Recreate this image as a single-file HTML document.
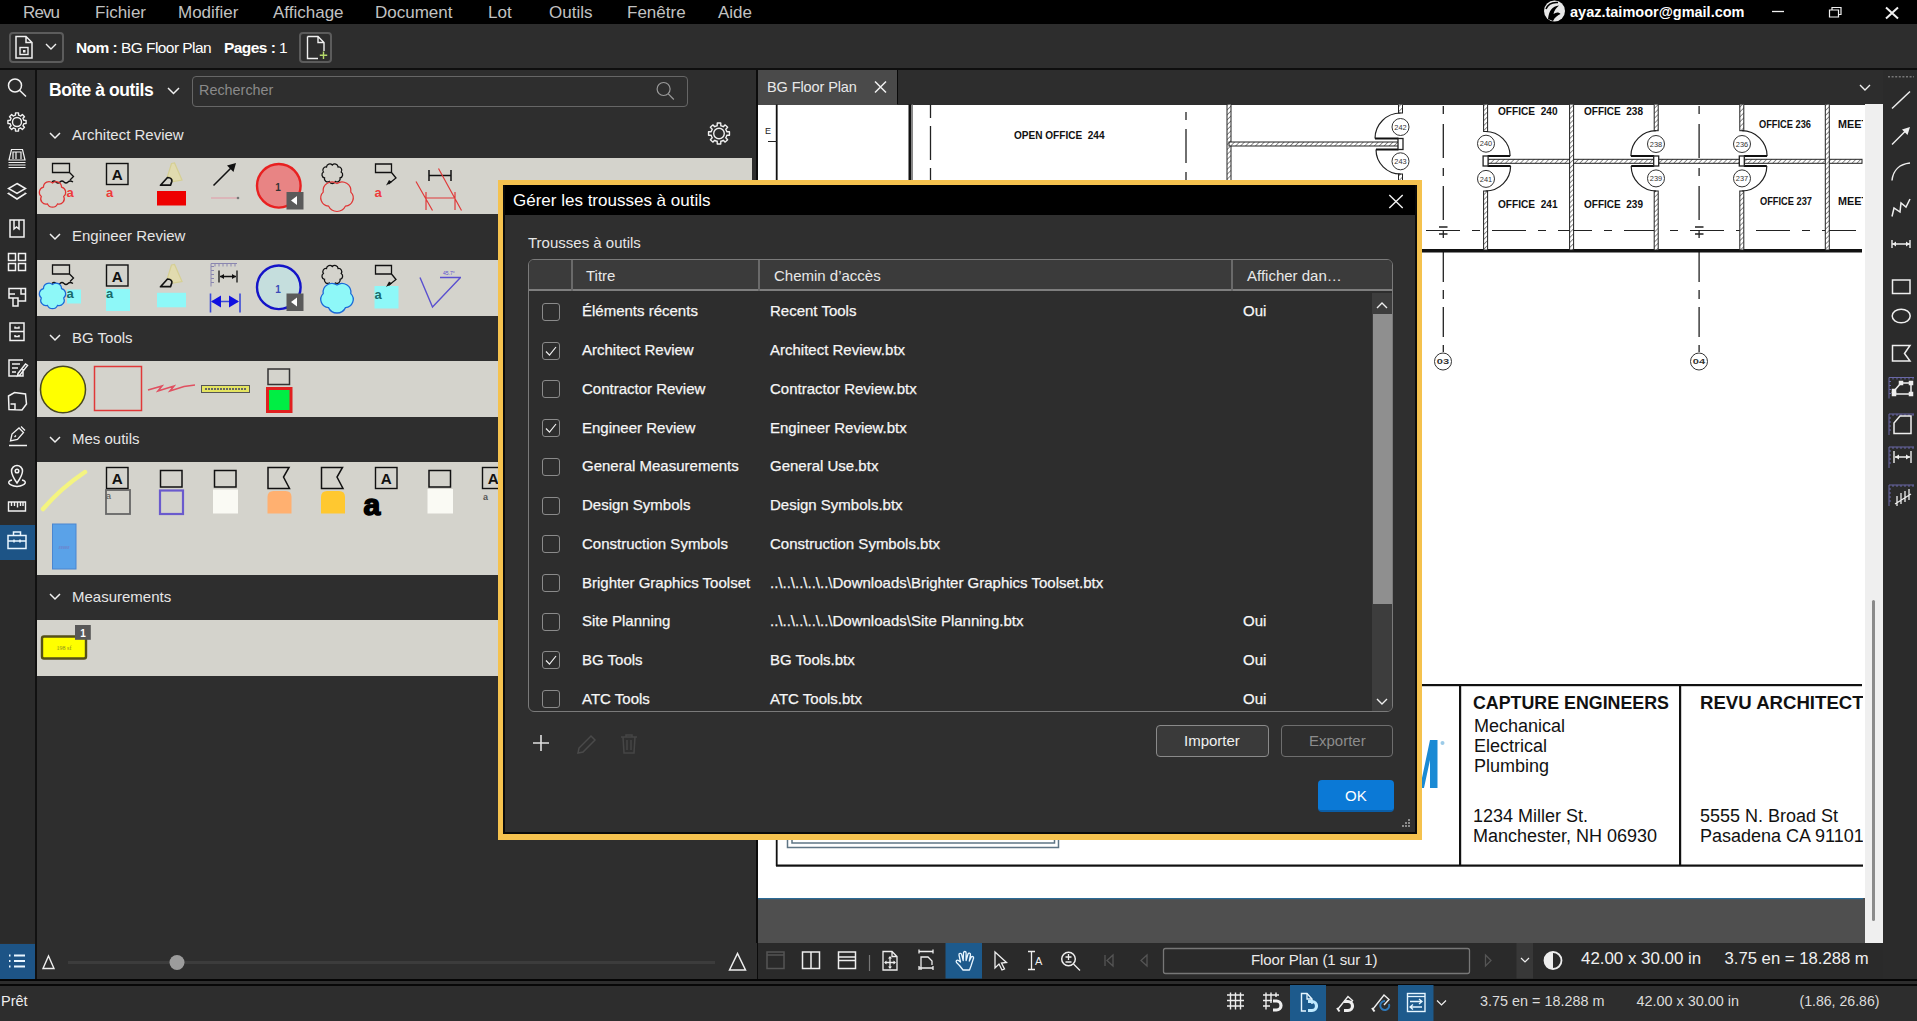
<!DOCTYPE html>
<html><head><meta charset="utf-8">
<style>
*{margin:0;padding:0;box-sizing:border-box}
html,body{width:1917px;height:1021px;overflow:hidden;background:#2e2e2e;font-family:"Liberation Sans",sans-serif;color:#fff}
.a{position:absolute}
.t{position:absolute;white-space:nowrap;line-height:1}
svg{position:absolute;overflow:visible}
</style></head><body>
<!-- MENU BAR -->
<div class="a" style="left:0;top:0;width:1917px;height:24.5px;background:#000"></div>
<div id="menu">
<span class="t" style="left:23px;top:4px;font-size:17px;letter-spacing:-0.9px;color:#c2c2c2">Revu</span>
<span class="t" style="left:95px;top:4px;font-size:17px;color:#c2c2c2">Fichier</span>
<span class="t" style="left:178px;top:4px;font-size:17px;color:#c2c2c2">Modifier</span>
<span class="t" style="left:273px;top:4px;font-size:17px;color:#c2c2c2">Affichage</span>
<span class="t" style="left:375px;top:4px;font-size:17px;color:#c2c2c2">Document</span>
<span class="t" style="left:488px;top:4px;font-size:17px;color:#c2c2c2">Lot</span>
<span class="t" style="left:549px;top:4px;font-size:17px;color:#c2c2c2">Outils</span>
<span class="t" style="left:627px;top:4px;font-size:17px;color:#c2c2c2">Fenêtre</span>
<span class="t" style="left:718px;top:4px;font-size:17px;color:#c2c2c2">Aide</span>
</div>
<span class="t" style="left:1570px;top:5px;font-size:14.5px;font-weight:bold;color:#fff">ayaz.taimoor@gmail.com</span>

<!-- TOOLBAR -->
<div class="a" style="left:0;top:24px;width:1917px;height:44px;background:#2d2d2d"></div>
<div class="a" style="left:0;top:68px;width:1917px;height:2px;background:#0e0e0e"></div>
<div class="a" style="left:9px;top:32px;width:55px;height:31px;border:2px solid #5c5c5c;border-radius:4px"></div>
<span class="t" style="left:76px;top:40px;font-size:15.5px;letter-spacing:-0.55px;color:#fff"><b>Nom :</b> BG Floor Plan</span>
<span class="t" style="left:224px;top:40px;font-size:15.5px;letter-spacing:-0.55px;color:#fff"><b>Pages :</b> 1</span>
<div class="a" style="left:299px;top:32px;width:33px;height:31px;border:2px solid #5c5c5c;border-radius:4px"></div>

<!-- LEFT ICON STRIP -->
<div class="a" style="left:0;top:70px;width:35px;height:873px;background:#2b2b2b"></div>
<div class="a" style="left:35px;top:70px;width:2px;height:912px;background:#111"></div>
<div class="a" style="left:0;top:525px;width:35px;height:35px;background:#1d5486"></div>
<div class="a" style="left:0;top:944px;width:35px;height:35px;background:#1d5486"></div>


<!-- ICONS LEFT STRIP -->
<svg width="36" height="500" style="left:0;top:70px" fill="none" stroke="#f2f2f2" stroke-width="1.5">
 <!-- search y=87 -->
 <circle cx="15" cy="15.5" r="6.5"/><path d="M19.8 20.5 L26 26.5"/>
 <!-- gear y=122 -->
 <g stroke-width="1.4" stroke-linejoin="round"><path d="M15.42 45.18 L15.49 42.92 L18.51 42.92 L18.58 45.18 A7.0 7.0 0 0 1 20.70 46.06 L22.35 44.51 L24.49 46.65 L22.94 48.30 A7.0 7.0 0 0 1 23.82 50.42 L26.08 50.49 L26.08 53.51 L23.82 53.58 A7.0 7.0 0 0 1 22.94 55.70 L24.49 57.35 L22.35 59.49 L20.70 57.94 A7.0 7.0 0 0 1 18.58 58.82 L18.51 61.08 L15.49 61.08 L15.42 58.82 A7.0 7.0 0 0 1 13.30 57.94 L11.65 59.49 L9.51 57.35 L11.06 55.70 A7.0 7.0 0 0 1 10.18 53.58 L7.92 53.51 L7.92 50.49 L10.18 50.42 A7.0 7.0 0 0 1 11.06 48.30 L9.51 46.65 L11.65 44.51 L13.30 46.06 A7.0 7.0 0 0 1 15.42 45.18 Z"/><circle cx="17" cy="52" r="4.5"/></g>
 <!-- sheets y=157 -->
 <path d="M9 90 L11.5 79.5 H22.5 L25 90 Z M13 89 V82 H21 V89 M16 82 V89" stroke-width="1.2"/>
 <path d="M8.5 92.5 H25.5 M8.5 95 H25.5 M8.5 97.5 H25.5" stroke-width="1.1"/>
 <!-- layers y=192 -->
 <path d="M17 113.5 L25.5 118.5 L17 123.5 L8.5 118.5 Z"/>
 <path d="M9.5 123 L8.5 123.5 L17 129 L25.5 123.5 L24.5 123"/>
 <!-- bookmark y=228 -->
 <path d="M10 150 H24 V167 H10 Z M14 150 V159 L16.5 157 L19 159 V150"/>
 <!-- grid y=262 -->
 <rect x="8.5" y="183.5" width="7" height="7"/><rect x="18.5" y="183.5" width="7" height="7"/>
 <rect x="8.5" y="193.5" width="7" height="7"/><rect x="18.5" y="193.5" width="7" height="7"/>
 <!-- floorplan y=297 -->
 <path d="M9 218.5 H25.5 V231 H18 V236 H13 V228 H9 Z M9 224 H15 M13 228 H18 V231 M21 218.5 V224 H25.5"/>
 <!-- cabinet y=332 -->
 <path d="M10 253 H24 V270.5 H10 Z M10 261.5 H24 M15 256.5 V258 H19 V256.5 M15 265 V266.5 H19 V265"/>
 <!-- form y=367 -->
 <path d="M23 290 H9 V306 H23 V299 M12 294 H20 M12 298 H18 M12 302 H16 M18 303.5 L25.5 294 L27.5 295.5 L20 305 L17.5 306 Z"/>
 <!-- polygon y=402 -->
 <path d="M8.5 326 L14.5 322.5 L25.5 324 L26.5 334 L22 340 L9 339.5 Z M10.5 334 H15 V339.5"/>
 <!-- pen sign y=437 -->
 <path d="M9 447.5 H27 M10.5 443 L12 436 L19 430 L23.5 434.5 L17.5 441.5 Z M21 428.5 L25 432.5 M14.5 439 L16 437.5" stroke-width="1.3" transform="translate(0 -72)"/>
 <!-- location y=475 -->
 <g transform="translate(0 -68)"><path d="M17 481 C12 474 11.5 471 11.5 469 A5.5 5.5 0 0 1 22.5 469 C22.5 471 22 474 17 481 Z"/>
 <circle cx="17" cy="469" r="1.8"/>
 <path d="M12 478 C7 479 7 483 17 484.5 C27 483 27 479 22 478"/></g>
</svg>
<svg width="36" height="60" style="left:0;top:495px" fill="none" stroke="#f2f2f2" stroke-width="1.5">
 <!-- ruler y=507 -->
 <path d="M8.5 7 H25.5 V16 H8.5 Z M11.5 7 V11 M14.5 7 V11 M17.5 7 V12.5 M20.5 7 V11 M23 7 V11" stroke-width="1.4"/>
 <!-- toolbox y=542 -->
 <path d="M8 40.5 H26 V53.5 H8 Z M8 46 H26 M13.5 40.5 V37 H20.5 V40.5 M14 44.5 V47.5 M20 44.5 V47.5" stroke="#e9f6ff"/>
</svg>
<!-- bottom list icon -->
<svg width="36" height="36" style="left:0;top:943px" fill="none" stroke="#e9f6ff" stroke-width="1.8">
 <path d="M9 12.5 H10.5 M9 18 H10.5 M9 23.5 H10.5 M14 12.5 H25 M14 18 H25 M14 23.5 H25"/>
</svg>

<!-- TOOLBOX PANEL -->
<div class="a" style="left:37px;top:70px;width:720px;height:912px;background:#2e2e2e"></div>
<span class="t" style="left:49px;top:82px;font-size:17.5px;letter-spacing:-0.4px;font-weight:bold;color:#fff">Boîte à outils</span>
<div class="a" style="left:192px;top:75.5px;width:496px;height:31px;border:1.6px solid #666;border-radius:4px"></div>
<span class="t" style="left:199px;top:83px;font-size:14.4px;color:#8a8a8a">Rechercher</span>

<span class="t" style="left:72px;top:127px;font-size:15px;color:#e6e6e6">Architect Review</span>
<div class="a" style="left:37px;top:158px;width:715px;height:56px;background:#d4d3cc"></div>
<span class="t" style="left:72px;top:228px;font-size:15px;color:#e6e6e6">Engineer Review</span>
<div class="a" style="left:37px;top:260px;width:715px;height:56px;background:#d4d3cc"></div>
<span class="t" style="left:72px;top:330px;font-size:15px;color:#e6e6e6">BG Tools</span>
<div class="a" style="left:37px;top:361px;width:715px;height:56px;background:#d4d3cc"></div>
<span class="t" style="left:72px;top:431px;font-size:15px;color:#e6e6e6">Mes outils</span>
<div class="a" style="left:37px;top:462px;width:715px;height:113px;background:#d4d3cc"></div>
<span class="t" style="left:72px;top:589px;font-size:15px;color:#e6e6e6">Measurements</span>
<div class="a" style="left:37px;top:620px;width:715px;height:56px;background:#d4d3cc"></div>

<!-- TOOLICONS -->
<svg width="760" height="700" style="left:0;top:0" font-family="Liberation Sans, sans-serif">
<g>
<g transform="translate(0 0)">
<path d="M52.5 163.5 H69.5 V172.5 H52.5 Z M69.5 172.5 L73.5 176.5 L70 180" fill="none" stroke="#111" stroke-width="1.3"/>
<path d="M52 182 Q54 180 56 182 T60 182 T64 182 T68 182 T73 182" fill="none" stroke="#111" stroke-width="1.3"/>
<path d="M52.5 183.0 A5.4 5.4 0 0 1 61.5 187.1 A5.3 5.3 0 0 1 63.7 196.4 A5.3 5.3 0 0 1 57.5 203.9 A5.5 5.5 0 0 1 47.5 203.9 A5.3 5.3 0 0 1 41.3 196.4 A5.3 5.3 0 0 1 43.5 187.1 A5.4 5.4 0 0 1 52.5 183.0 Z" fill="none" stroke="#e03434" stroke-width="1.2"/>
<text x="66.5" y="196.5" font-size="13" font-weight="bold" fill="#ee3a3a">a</text>
<rect x="106.5" y="163.5" width="21.5" height="21" fill="none" stroke="#111" stroke-width="1.4"/>
<text x="117.3" y="180" font-size="14.5" font-weight="bold" fill="#111" text-anchor="middle" textLength="11" lengthAdjust="spacingAndGlyphs">A</text>
<text x="106" y="196.5" font-size="13" font-weight="bold" fill="#ee3a3a">a</text>
<path d="M171.5 163.5 L174.5 163 L182 180 L173 181.5 Q171.5 176.5 167.5 176.5 Z" fill="#e6dea6" stroke="#d6ce80" stroke-width="1.2" opacity="0.75"/><path d="M160.5 185.2 L167.5 177.5 Q172.5 178 171.8 181.5 L170.5 185.2 Z" fill="none" stroke="#111" stroke-width="1.7" stroke-linejoin="round"/>

<rect x="157" y="191" width="29" height="14.5" fill="#ee0000"/>
</g>
<path d="M213.5 185.5 L233 166" stroke="#111" stroke-width="1.6"/><path d="M236 163 L227 165.5 L233.5 172 Z" fill="#111"/>
<path d="M211 198 H237" stroke="#dcb0b4" stroke-width="1.6"/><circle cx="238" cy="198" r="1.3" fill="#777"/>
<circle cx="278.8" cy="185.8" r="21.8" fill="#e88484" stroke="#e82020" stroke-width="2.4"/>
<text x="278" y="191" font-size="10" font-weight="bold" fill="#333" text-anchor="middle">1</text>
<rect x="286.5" y="192" width="17" height="17.5" fill="#5a5a5a"/><path d="M291 200.5 L297 196 V205 Z" fill="#fff"/>
<path d="M332.3 165.0 A3.4 3.4 0 0 1 338.1 167.0 A3.2 3.2 0 0 1 341.2 172.0 A3.2 3.2 0 0 1 340.1 177.8 A3.3 3.3 0 0 1 335.4 181.5 A3.4 3.4 0 0 1 329.2 181.5 A3.3 3.3 0 0 1 324.5 177.8 A3.2 3.2 0 0 1 323.4 172.0 A3.2 3.2 0 0 1 326.5 167.0 A3.4 3.4 0 0 1 332.3 165.0 Z" fill="none" stroke="#111" stroke-width="1.3"/>
<path d="M337.0 183.5 A8.9 8.9 0 0 1 350.8 192.1 A8.2 8.2 0 0 1 345.5 206.1 A9.4 9.4 0 0 1 328.5 206.1 A8.2 8.2 0 0 1 323.2 192.1 A8.9 8.9 0 0 1 337.0 183.5 Z" fill="none" stroke="#e03434" stroke-width="1.2"/>
<path d="M375.5 164 H391.5 V172.5 H375.5 Z M391.5 172.5 L396 178 L388.5 184" fill="none" stroke="#111" stroke-width="1.3"/><path d="M386 185.5 L392 182 L389 180 Z" fill="#111"/>
<text x="374.5" y="197" font-size="13" font-weight="bold" fill="#ee3a3a">a</text>
<path d="M429 175.5 H451 M429 170 V181 M451 170 V181" stroke="#111" stroke-width="1.5"/>
<path d="M416 181.5 L432.5 210.5 M438.5 168.5 L461.5 210.5 M426 198 H455 M426 192 V210 M455 192 V210" stroke="#e03a3a" stroke-width="1.2" fill="none"/>
</g>
<g transform="translate(0 101.5)">
<path d="M52.5 163.5 H69.5 V172.5 H52.5 Z M69.5 172.5 L73.5 176.5 L70 180" fill="none" stroke="#111" stroke-width="1.3"/>
<path d="M52 182 Q54 180 56 182 T60 182 T64 182 T68 182 T73 182" fill="none" stroke="#111" stroke-width="1.3"/>
<rect x="67" y="188" width="14" height="14" fill="#8ef8f8"/>
<path d="M52.5 183.0 A5.4 5.4 0 0 1 61.5 187.1 A5.3 5.3 0 0 1 63.7 196.4 A5.3 5.3 0 0 1 57.5 203.9 A5.5 5.5 0 0 1 47.5 203.9 A5.3 5.3 0 0 1 41.3 196.4 A5.3 5.3 0 0 1 43.5 187.1 A5.4 5.4 0 0 1 52.5 183.0 Z" fill="#8ef8f8" stroke="#1a6ad8" stroke-width="1.2"/>
<text x="66.5" y="196.5" font-size="13" font-weight="bold" fill="#1a6a6a">a</text>
<rect x="106.5" y="163.5" width="21.5" height="21" fill="none" stroke="#111" stroke-width="1.4"/>
<text x="117.3" y="180" font-size="14.5" font-weight="bold" fill="#111" text-anchor="middle" textLength="11" lengthAdjust="spacingAndGlyphs">A</text>
<rect x="106" y="187.5" width="24" height="22" fill="#8ef8f8"/>
<text x="106" y="196.5" font-size="13" font-weight="bold" fill="#1a6a6a">a</text>
<path d="M171.5 163.5 L174.5 163 L182 180 L173 181.5 Q171.5 176.5 167.5 176.5 Z" fill="#e6dea6" stroke="#d6ce80" stroke-width="1.2" opacity="0.75"/><path d="M160.5 185.2 L167.5 177.5 Q172.5 178 171.8 181.5 L170.5 185.2 Z" fill="none" stroke="#111" stroke-width="1.7" stroke-linejoin="round"/>

<rect x="157" y="191.3" width="29" height="14.5" fill="#8ef8f8"/>
</g>
<g transform="translate(0 101.5)">
<path d="M211 162 V185 M211 162 H237 M211 165 H214 M211 169 H214 M211 173 H214 M211 177 H214 M211 181 H214 M215 162 V165 M219 162 V165 M223 162 V165 M227 162 V165 M231 162 V165 M235 162 V165" stroke="#8a86b0" stroke-width="1"/>
<path d="M219 169 V181 M237 169 V181 M220 175 H236" stroke="#111" stroke-width="1.3"/><path d="M220 175 L224 172.5 V177.5 Z M236 175 L232 172.5 V177.5 Z" fill="#111"/>
<path d="M210.5 192 V211 M240 192 V211 M212 200 H238" stroke="#3a4ad8" stroke-width="1.6"/><path d="M211 200 L221 194 V206 Z M239 200 L229 194 V206 Z" fill="#1010e0"/>
<circle cx="278.8" cy="185.8" r="21.8" fill="#c5dedd" stroke="#1414c8" stroke-width="2.4"/>
<text x="278" y="191" font-size="10" font-weight="bold" fill="#3a4ab8" text-anchor="middle">1</text>
<rect x="286.5" y="192" width="17" height="17.5" fill="#5a5a5a"/><path d="M291 200.5 L297 196 V205 Z" fill="#fff"/>
<path d="M332.3 165.0 A3.4 3.4 0 0 1 338.1 167.0 A3.2 3.2 0 0 1 341.2 172.0 A3.2 3.2 0 0 1 340.1 177.8 A3.3 3.3 0 0 1 335.4 181.5 A3.4 3.4 0 0 1 329.2 181.5 A3.3 3.3 0 0 1 324.5 177.8 A3.2 3.2 0 0 1 323.4 172.0 A3.2 3.2 0 0 1 326.5 167.0 A3.4 3.4 0 0 1 332.3 165.0 Z" fill="none" stroke="#111" stroke-width="1.3"/>
<path d="M337.0 183.5 A8.9 8.9 0 0 1 350.8 192.1 A8.2 8.2 0 0 1 345.5 206.1 A9.4 9.4 0 0 1 328.5 206.1 A8.2 8.2 0 0 1 323.2 192.1 A8.9 8.9 0 0 1 337.0 183.5 Z" fill="#8ef8f8" stroke="#1a6ad8" stroke-width="1.3"/>
<rect x="374.5" y="184.5" width="24" height="22.5" fill="#8ef8f8"/>
<path d="M375.5 164 H391.5 V172.5 H375.5 Z M391.5 172.5 L396 178 L388.5 184" fill="none" stroke="#111" stroke-width="1.3"/><path d="M386 185.5 L392 182 L389 180 Z" fill="#111"/>
<text x="374.5" y="197" font-size="13" font-weight="bold" fill="#1a6a6a">a</text>
<path d="M420 176 L432.5 205.5 L460.5 176 M440 176 H461" stroke="#5a50d0" stroke-width="1.4" fill="none"/>
<text x="443" y="173" font-size="5" fill="#5a50d0">45.7°</text>
</g>
<ellipse cx="63" cy="389.5" rx="22.5" ry="23.3" fill="#ffff00" stroke="#4a4a20" stroke-width="1.5"/>
<rect x="94.5" y="366.5" width="47" height="44" fill="none" stroke="#e03838" stroke-width="1.5"/>
<path d="M148 390 L162 386 L158 391 L174 386 L170 391 L184 386.5 L195 385" fill="none" stroke="#e05060" stroke-width="1.6"/>
<rect x="201.5" y="385.5" width="48" height="7" fill="#e4e460" stroke="#555" stroke-width="1"/>
<path d="M205 389 H246" stroke="#666" stroke-width="2" stroke-dasharray="2 1"/>
<rect x="268" y="369" width="21.5" height="15.5" fill="none" stroke="#333" stroke-width="1.5"/>
<rect x="267.5" y="388.5" width="23.5" height="23" fill="#00ee44" stroke="#e02020" stroke-width="3"/>
<path d="M43 509 C55 495 70 482 85 472" fill="none" stroke="#f4f480" stroke-width="4.5" stroke-linecap="round"/>
<rect x="106.5" y="467.5" width="21.5" height="21" fill="none" stroke="#111" stroke-width="1.4"/>
<text x="117.3" y="484" font-size="14.5" font-weight="bold" fill="#111" text-anchor="middle" textLength="11" lengthAdjust="spacingAndGlyphs">A</text>
<rect x="106" y="490" width="24" height="24" fill="none" stroke="#666" stroke-width="1.8"/>
<text x="106" y="499" font-size="9" fill="#555">a</text>
<rect x="160.5" y="470.5" width="21.5" height="16.5" fill="none" stroke="#111" stroke-width="1.5"/>
<rect x="160" y="490.5" width="23" height="23.5" fill="none" stroke="#6a5acd" stroke-width="2.2"/>
<rect x="214.5" y="470.5" width="21.5" height="16.5" fill="none" stroke="#111" stroke-width="1.5"/>
<rect x="213" y="489.5" width="25" height="24" fill="#fafaf4"/>
<path d="M268.0 467.5 H289.0 L283.5 477 L289.5 488.5 H268.0 Z" fill="none" stroke="#111" stroke-width="1.5"/>
<path d="M267.5 513.5 V497 Q267.5 491 273.5 491 H285.5 Q291.5 491 291.5 497 V513.5 Z" fill="#ffb070"/>
<path d="M321.5 467.5 H342.5 L337 477 L343 488.5 H321.5 Z" fill="none" stroke="#111" stroke-width="1.5"/>
<path d="M321 513.5 V497 Q321 491 327 491 H339 Q345 491 345 497 V513.5 Z" fill="#ffc830"/>
<rect x="375.5" y="467.5" width="21.5" height="21" fill="none" stroke="#111" stroke-width="1.4"/>
<text x="386.3" y="484" font-size="14.5" font-weight="bold" fill="#111" text-anchor="middle" textLength="11" lengthAdjust="spacingAndGlyphs">A</text>
<text x="363.5" y="514.5" font-size="30" font-weight="bold" fill="#000" stroke="#000" stroke-width="1.6">a</text>
<rect x="429" y="470.5" width="21.5" height="16.5" fill="none" stroke="#111" stroke-width="1.5"/>
<rect x="427.5" y="489" width="25.5" height="24.5" fill="#fafaf4"/>
<rect x="482.5" y="467.5" width="21.5" height="21" fill="none" stroke="#111" stroke-width="1.4"/>
<text x="493.3" y="484" font-size="14.5" font-weight="bold" fill="#111" text-anchor="middle" textLength="11" lengthAdjust="spacingAndGlyphs">A</text>
<text x="483" y="500" font-size="9" font-weight="bold" fill="#555">a</text>
<rect x="52.5" y="524" width="23.5" height="45" fill="#5aa2e8" stroke="#4a86d0" stroke-width="1"/>
<text x="64" y="549" font-size="4" fill="#8a50a0" text-anchor="middle">#####</text>
<rect x="42" y="636.5" width="44" height="22" rx="2" fill="#ffff00" stroke="#555018" stroke-width="2.4"/>
<text x="64" y="650" font-size="6" fill="#8a8a20" text-anchor="middle" font-family="Liberation Serif">198 sf</text>
<rect x="75" y="625" width="15.8" height="14.8" fill="#585858"/>
<text x="83" y="636.5" font-size="10" font-weight="bold" fill="#fff" text-anchor="middle">1</text>
</svg>
<!-- /TOOLICONS -->
<div class="a" style="left:756px;top:70px;width:2px;height:909px;background:#0c0c0c"></div>

<!-- DOC AREA -->
<div class="a" style="left:758px;top:70px;width:1125px;height:34.5px;background:#2d2d2d"></div>
<div class="a" style="left:758px;top:70px;width:138.5px;height:34.5px;background:#4a4a4a"></div>
<div class="a" style="left:896.5px;top:70px;width:1.5px;height:34px;background:#0a0a0a"></div>
<span class="t" style="left:767px;top:80px;font-size:14.5px;letter-spacing:-0.1px;color:#e8e8e8">BG Floor Plan</span>
<div class="a" style="left:758px;top:104.5px;width:1107px;height:794px;background:#fff"></div>
<div class="a" style="left:758px;top:898px;width:1107px;height:45px;background:#4f4f4f"></div>
<!-- FLOORPLAN -->
<svg width="1917" height="1021" style="left:0;top:0" font-family="Liberation Sans, sans-serif">
<defs>
<pattern id="hv" width="3.5" height="3.5" patternUnits="userSpaceOnUse" patternTransform="rotate(45)"><rect width="3.5" height="3.5" fill="#fff"/><line x1="0" y1="0" x2="0" y2="3.5" stroke="#555" stroke-width="1.3"/></pattern>
<pattern id="hh" width="3.5" height="3.5" patternUnits="userSpaceOnUse" patternTransform="rotate(45)"><rect width="3.5" height="3.5" fill="#fff"/><line x1="0" y1="0" x2="0" y2="3.5" stroke="#555" stroke-width="1.3"/></pattern>
<clipPath id="docclip"><rect x="758" y="104.5" width="1105" height="795"/></clipPath>
</defs>
<g clip-path="url(#docclip)">
<rect x="775.8" y="104" width="1.8" height="762" fill="#111"/>
<rect x="776" y="864.5" width="1090" height="2.2" fill="#111"/>
<text x="765" y="134" font-size="9" fill="#222">E</text>
<line x1="768" y1="141.5" x2="777" y2="141.5" stroke="#222" stroke-width="1"/>
<rect x="908.5" y="104" width="3" height="80" fill="#111"/><rect x="911.5" y="104" width="1.5" height="80" fill="#888"/>
<line x1="930.5" y1="104" x2="930.5" y2="184" stroke="#222" stroke-width="1.3" stroke-dasharray="14 8 34 8" stroke-dashoffset="0"/>
<text x="1014" y="139" font-size="10.5" font-weight="bold" fill="#111" textLength="90.5" lengthAdjust="spacingAndGlyphs">OPEN OFFICE&#160;&#160;244</text>
<line x1="1186" y1="104" x2="1186" y2="184" stroke="#222" stroke-width="1.3" stroke-dasharray="8 9 34 9" stroke-dashoffset="-8"/>
<rect x="1227" y="104" width="4" height="80" fill="url(#hv)" stroke="#222" stroke-width="1"/>
<rect x="1229" y="142" width="170" height="4" fill="url(#hh)" stroke="#222" stroke-width="1"/>
<rect x="1398.5" y="104" width="4" height="9" fill="url(#hv)" stroke="#222" stroke-width="1"/>
<rect x="1398.5" y="174" width="4" height="10" fill="url(#hv)" stroke="#222" stroke-width="1"/>
<path d="M1400.5 113 A25.5 25.5 0 0 0 1375.0 138.5" fill="none" stroke="#222" stroke-width="1.2"/>
<path d="M1400.5 174 A24.5 24.5 0 0 1 1376.0 149.5" fill="none" stroke="#222" stroke-width="1.2"/>
<path d="M1375.0 138.5 H1398.5 M1376.0 149.5 H1398.5" stroke="#111" stroke-width="2"/>
<rect x="1398.0" y="138.5" width="5" height="11.0" fill="#fff" stroke="#222" stroke-width="1.3"/>
<circle cx="1400.5" cy="127" r="8.5" fill="#fff" stroke="#333" stroke-width="1"/><text x="1400.5" y="129.7" font-size="7.5" text-anchor="middle" fill="#333" textLength="12.3" lengthAdjust="spacingAndGlyphs">242</text>
<circle cx="1400.5" cy="161.3" r="8.5" fill="#fff" stroke="#333" stroke-width="1"/><text x="1400.5" y="164.0" font-size="7.5" text-anchor="middle" fill="#333" textLength="12.3" lengthAdjust="spacingAndGlyphs">243</text>
<line x1="1443.3" y1="104" x2="1443.3" y2="242" stroke="#222" stroke-width="1.3" stroke-dasharray="8 10 34 10" stroke-dashoffset="-2"/>
<path d="M1439 227 H1447.5 M1439 234 H1447.5" stroke="#222" stroke-width="1.6"/>
<line x1="1443.3" y1="252" x2="1443.3" y2="352" stroke="#222" stroke-width="1.3" stroke-dasharray="30 8 9 8" stroke-dashoffset="0"/>
<circle cx="1443" cy="361.5" r="8.5" fill="#fff" stroke="#333" stroke-width="1"/><text x="1443" y="364.2" font-size="8" font-weight="bold" text-anchor="middle" fill="#333" textLength="12.3" lengthAdjust="spacingAndGlyphs">03</text>
<line x1="1699.1" y1="104" x2="1699.1" y2="242" stroke="#222" stroke-width="1.3" stroke-dasharray="8 10 34 10" stroke-dashoffset="-2"/>
<path d="M1695 227 H1703.5 M1695 234 H1703.5" stroke="#222" stroke-width="1.6"/>
<line x1="1699.1" y1="252" x2="1699.1" y2="352" stroke="#222" stroke-width="1.3" stroke-dasharray="30 8 9 8" stroke-dashoffset="0"/>
<circle cx="1699" cy="361.5" r="8.5" fill="#fff" stroke="#333" stroke-width="1"/><text x="1699" y="364.2" font-size="8" font-weight="bold" text-anchor="middle" fill="#333" textLength="12.3" lengthAdjust="spacingAndGlyphs">04</text>
<line x1="1426" y1="230.5" x2="1862" y2="230.5" stroke="#222" stroke-width="1.2" stroke-dasharray="34 12 8 12"/>
<rect x="1422" y="249" width="440" height="3.5" fill="#111"/>
<rect x="1483.6" y="104" width="4" height="27.5" fill="url(#hv)" stroke="#222" stroke-width="1"/>
<rect x="1483.6" y="191" width="4" height="59" fill="url(#hv)" stroke="#222" stroke-width="1"/>
<rect x="1486" y="159.3" width="376" height="4" fill="url(#hh)" stroke="#222" stroke-width="1"/>
<path d="M1485.6 131.5 A24.5 24.5 0 0 1 1510.1 156" fill="none" stroke="#222" stroke-width="1.2"/>
<path d="M1485.6 191 A25 25 0 0 0 1510.6 166" fill="none" stroke="#222" stroke-width="1.2"/>
<path d="M1510.1 156 H1487.6 M1510.6 166 H1487.6" stroke="#111" stroke-width="2"/>
<rect x="1483.1" y="156" width="5" height="10" fill="#fff" stroke="#222" stroke-width="1.3"/>
<circle cx="1486" cy="143.7" r="8.5" fill="#fff" stroke="#333" stroke-width="1"/><text x="1486" y="146.39999999999998" font-size="7.5" text-anchor="middle" fill="#333" textLength="12.3" lengthAdjust="spacingAndGlyphs">240</text>
<circle cx="1486" cy="178.9" r="8.5" fill="#fff" stroke="#333" stroke-width="1"/><text x="1486" y="181.6" font-size="7.5" text-anchor="middle" fill="#333" textLength="12.3" lengthAdjust="spacingAndGlyphs">241</text>
<rect x="1569.6" y="104" width="4" height="146" fill="url(#hv)" stroke="#222" stroke-width="1"/>
<rect x="1654.2" y="104" width="4" height="26.69999999999999" fill="url(#hv)" stroke="#222" stroke-width="1"/>
<rect x="1654.2" y="191" width="4" height="59" fill="url(#hv)" stroke="#222" stroke-width="1"/>
<path d="M1656.2 130.7 A25.30000000000001 25.30000000000001 0 0 0 1630.9 156" fill="none" stroke="#222" stroke-width="1.2"/>
<path d="M1656.2 191 A25 25 0 0 1 1631.2 166" fill="none" stroke="#222" stroke-width="1.2"/>
<path d="M1630.9 156 H1654.2 M1631.2 166 H1654.2" stroke="#111" stroke-width="2"/>
<rect x="1653.7" y="156" width="5" height="10" fill="#fff" stroke="#222" stroke-width="1.3"/>
<circle cx="1656" cy="144" r="8.5" fill="#fff" stroke="#333" stroke-width="1"/><text x="1656" y="146.7" font-size="7.5" text-anchor="middle" fill="#333" textLength="12.3" lengthAdjust="spacingAndGlyphs">238</text>
<circle cx="1656" cy="178.4" r="8.5" fill="#fff" stroke="#333" stroke-width="1"/><text x="1656" y="181.1" font-size="7.5" text-anchor="middle" fill="#333" textLength="12.3" lengthAdjust="spacingAndGlyphs">239</text>
<rect x="1739.8" y="104" width="4" height="26.69999999999999" fill="url(#hv)" stroke="#222" stroke-width="1"/>
<rect x="1739.8" y="191" width="4" height="59" fill="url(#hv)" stroke="#222" stroke-width="1"/>
<path d="M1741.8 130.7 A25.30000000000001 25.30000000000001 0 0 1 1767.1 156" fill="none" stroke="#222" stroke-width="1.2"/>
<path d="M1741.8 191 A25 25 0 0 0 1766.8 166" fill="none" stroke="#222" stroke-width="1.2"/>
<path d="M1767.1 156 H1743.8 M1766.8 166 H1743.8" stroke="#111" stroke-width="2"/>
<rect x="1739.3" y="156" width="5" height="10" fill="#fff" stroke="#222" stroke-width="1.3"/>
<circle cx="1742" cy="144" r="8.5" fill="#fff" stroke="#333" stroke-width="1"/><text x="1742" y="146.7" font-size="7.5" text-anchor="middle" fill="#333" textLength="12.3" lengthAdjust="spacingAndGlyphs">236</text>
<circle cx="1742" cy="178.4" r="8.5" fill="#fff" stroke="#333" stroke-width="1"/><text x="1742" y="181.1" font-size="7.5" text-anchor="middle" fill="#333" textLength="12.3" lengthAdjust="spacingAndGlyphs">237</text>
<rect x="1825.3" y="104" width="4" height="146" fill="url(#hv)" stroke="#222" stroke-width="1"/>
<text x="1498" y="115" font-size="11" font-weight="bold" fill="#111" textLength="59.5" lengthAdjust="spacingAndGlyphs">OFFICE&#160;&#160;240</text>
<text x="1584" y="115" font-size="11" font-weight="bold" fill="#111" textLength="59" lengthAdjust="spacingAndGlyphs">OFFICE&#160;&#160;238</text>
<text x="1498" y="208" font-size="11" font-weight="bold" fill="#111" textLength="59.5" lengthAdjust="spacingAndGlyphs">OFFICE&#160;&#160;241</text>
<text x="1584" y="208" font-size="11" font-weight="bold" fill="#111" textLength="59" lengthAdjust="spacingAndGlyphs">OFFICE&#160;&#160;239</text>
<text x="1759" y="128" font-size="11" font-weight="bold" fill="#111" textLength="52" lengthAdjust="spacingAndGlyphs">OFFICE 236</text>
<text x="1760" y="204.5" font-size="11" font-weight="bold" fill="#111" textLength="52" lengthAdjust="spacingAndGlyphs">OFFICE 237</text>
<text x="1838" y="128" font-size="11" font-weight="bold" fill="#111" textLength="30" lengthAdjust="spacingAndGlyphs">MEET</text>
<text x="1838" y="204.5" font-size="11" font-weight="bold" fill="#111" textLength="30" lengthAdjust="spacingAndGlyphs">MEET</text>
<rect x="1422" y="684" width="440" height="2.2" fill="#111"/>
<rect x="1459" y="684" width="2.2" height="182" fill="#111"/>
<rect x="1679" y="684" width="2.2" height="182" fill="#111"/>
<path d="M1422 778 L1430 740 H1437.5 V788 H1430 V760 L1424 788 H1422 Z" fill="#1a8ad4"/>
<circle cx="1442.5" cy="743" r="2" fill="#9ccbe8"/>
<text x="1473" y="708.5" font-size="18" font-weight="bold" fill="#111" textLength="196" lengthAdjust="spacingAndGlyphs">CAPTURE ENGINEERS</text>
<text x="1700" y="708.5" font-size="18" font-weight="bold" fill="#111" textLength="176" lengthAdjust="spacingAndGlyphs">REVU ARCHITECTS</text>
<text x="1474" y="732" font-size="18" fill="#111">Mechanical</text>
<text x="1474" y="752" font-size="18" fill="#111">Electrical</text>
<text x="1474" y="772" font-size="18" fill="#111">Plumbing</text>
<text x="1473" y="822" font-size="18" fill="#111">1234 Miller St.</text>
<text x="1473" y="842" font-size="18" fill="#111">Manchester, NH 06930</text>
<text x="1700" y="822" font-size="18" fill="#111">5555 N. Broad St</text>
<text x="1700" y="842" font-size="18" fill="#111">Pasadena CA 91101</text>
<path d="M787.5 780 V847.5 H1058.5 V780" fill="none" stroke="#5f7585" stroke-width="1.5"/>
<path d="M792 780 V843 H1054.5 V780" fill="none" stroke="#5f7585" stroke-width="1.5"/>
<rect x="758" y="898" width="1107" height="1.5" fill="#2b6a95"/>
</g></svg>
<!-- /FLOORPLAN -->
<div class="a" style="left:1865px;top:104px;width:18px;height:839px;background:#efefef"></div>
<div class="a" style="left:1871.5px;top:600px;width:3px;height:321px;background:#8a8a8a;border-radius:1.5px"></div>
<div class="a" style="left:1883px;top:70px;width:34px;height:912px;background:#2b2b2b"></div>

<!-- BOTTOM BARS -->
<div class="a" style="left:37px;top:943px;width:720px;height:38px;background:#2e2e2e"></div>
<div class="a" style="left:758px;top:943px;width:1125px;height:36px;background:#2a2a2a"></div>
<div class="a" style="left:0;top:979px;width:1917px;height:42px;background:#2d2d2d"></div>
<div class="a" style="left:0;top:979px;width:1917px;height:2px;background:#050505"></div>
<div class="a" style="left:0;top:984px;width:1917px;height:1.5px;background:#080808"></div>
<span class="t" style="left:1px;top:994px;font-size:14.5px;color:#eee">Prêt</span>

<svg width="1917" height="1021" style="left:0;top:0" fill="none" stroke="#f0f0f0" stroke-width="1.5">
<path d="M50 133 L55 138 L60 133"/><path d="M50 234 L55 239 L60 234"/><path d="M50 335 L55 340 L60 335"/><path d="M50 437 L55 442 L60 437"/><path d="M50 594 L55 599 L60 594"/><path d="M168 88 L173.5 93.5 L179 88"/><circle cx="663.6" cy="89" r="6.5" stroke="#9a9a9a" stroke-width="1.2"/><path d="M668.3 93.8 L673.8 99.5" stroke="#9a9a9a" stroke-width="1.2"/><g stroke-width="1.4" stroke-linejoin="round"><path d="M717.19 125.71 L717.26 123.04 L720.74 123.04 L720.81 125.71 A8.0 8.0 0 0 1 723.23 126.71 L725.16 124.88 L727.62 127.34 L725.79 129.27 A8.0 8.0 0 0 1 726.79 131.69 L729.46 131.76 L729.46 135.24 L726.79 135.31 A8.0 8.0 0 0 1 725.79 137.73 L727.62 139.66 L725.16 142.12 L723.23 140.29 A8.0 8.0 0 0 1 720.81 141.29 L720.74 143.96 L717.26 143.96 L717.19 141.29 A8.0 8.0 0 0 1 714.77 140.29 L712.84 142.12 L710.38 139.66 L712.21 137.73 A8.0 8.0 0 0 1 711.21 135.31 L708.54 135.24 L708.54 131.76 L711.21 131.69 A8.0 8.0 0 0 1 712.21 129.27 L710.38 127.34 L712.84 124.88 L714.77 126.71 A8.0 8.0 0 0 1 717.19 125.71 Z"/><circle cx="719" cy="133.5" r="5.3"/></g><path d="M875 81.5 L886 92.5 M886 81.5 L875 92.5" stroke-width="1.5"/><path d="M1860 85 L1865 90 L1870 85" stroke-width="1.4"/><path d="M1772 11.5 H1784" stroke-width="1.3"/><path d="M1829.5 10 H1838.5 V17 H1829.5 Z M1832 10 V7.5 H1841 V14.5 H1838.5" stroke-width="1.2"/><path d="M1886 7.5 L1898 18.5 M1898 7.5 L1886 18.5" stroke-width="2"/><path d="M16 36.5 H26 L32 42.5 V58 H16 Z M26 36.5 V42.5 H32" stroke-width="1.5"/><rect x="20" y="47.5" width="8" height="7" stroke-width="1.4"/><rect x="23" y="50" width="2.5" height="2.5" fill="#f0f0f0" stroke="none"/><path d="M46 44 L51 49 L56 44" stroke-width="1.4"/><path d="M307.5 36.5 H318 L324 42.5 V51 M318 36.5 V42.5 H324 M318 58.5 H307.5 V36.5" stroke-width="1.4"/><path d="M323.5 51.5 V59 M319.8 55.3 H327.2" stroke="#b5d96a" stroke-width="1.4"/></svg>
<svg width="24" height="24" style="left:1543px;top:0px"><circle cx="11.5" cy="11" r="10.5" fill="#e8e8e8"/>
<path d="M5 19 C6 11 9 6 16 5.5 C13 8 11 11 10.5 14 C13 12 16 12 17.5 14 C15 15 12 17 10 21 Z" fill="#000"/>
<path d="M3 9 C5 4 10 2 15 2.5" stroke="#000" stroke-width="1.5" fill="none"/></svg>


<svg width="34" height="460" style="left:1883px;top:70px" fill="none" stroke="#eee" stroke-width="1.5">
<path d="M5 6.8 H31" stroke="#777" stroke-width="1.5" stroke-dasharray="2 1.6"/>
<path d="M9 38.5 L27 21.5"/>
<path d="M9 74.5 L24 59.5"/><path d="M27 57 L19 59.5 L24.5 65 Z" fill="#eee" stroke="none"/>
<path d="M9 110.5 C10 100 17 94 27 93"/>
<path d="M9 146.5 L11 138 L17 142 L18 133 L23 137 L27 129"/>
<path d="M9 174 H27 M9 170 V178 M27 170 V178" stroke-width="1.4"/><path d="M9.5 174 L13 171.5 V176.5 Z M26.5 174 L23 171.5 V176.5 Z" fill="#eee" stroke="none"/>
<rect x="9.5" y="210" width="17.5" height="13.5"/>
<ellipse cx="18.2" cy="246" rx="9" ry="6.8"/>
<path d="M9.5 275.5 H27 L21.5 283.5 L27 291 H9.5 Z"/>
<path d="M6 307.5 V328.5 M6 307.5 H31 M6 311.5 H8 M6 315.5 H8 M6 319.5 H8 M6 323.5 H8 M10 307.5 V309.5 M14 307.5 V309.5 M18 307.5 V309.5 M22 307.5 V309.5 M26 307.5 V309.5 M30 307.5 V309.5" stroke="#6a68a8" stroke-width="1"/>
<path d="M6 344 V365 M6 344 H31 M6 348 H8 M6 352 H8 M6 356 H8 M6 360 H8 M10 344 V346 M14 344 V346 M18 344 V346 M22 344 V346 M26 344 V346 M30 344 V346" stroke="#6a68a8" stroke-width="1"/>
<path d="M6 377 V398 M6 377 H31 M6 381 H8 M6 385 H8 M6 389 H8 M6 393 H8 M10 377 V379 M14 377 V379 M18 377 V379 M22 377 V379 M26 377 V379 M30 377 V379" stroke="#6a68a8" stroke-width="1"/>
<path d="M6 415 V436 M6 415 H31 M6 419 H8 M6 423 H8 M6 427 H8 M6 431 H8 M10 415 V417 M14 415 V417 M18 415 V417 M22 415 V417 M26 415 V417 M30 415 V417" stroke="#6a68a8" stroke-width="1"/>
<path d="M11 321 L18 313 H28 V324 H11" stroke-width="1.5"/><rect x="9.5" y="319.5" width="3" height="3" fill="#eee"/><rect x="16.5" y="311.5" width="3" height="3" fill="#eee"/><rect x="26.5" y="311.5" width="3" height="3" fill="#eee"/><rect x="26.5" y="322.5" width="3" height="3" fill="#eee"/><rect x="9.5" y="322.5" width="3" height="3" fill="#eee"/>
<path d="M11 363.5 V353 L17 346 H28 V363.5 Z"/>
<path d="M11 381 V393 M28 381 V393 M12 387 H27" stroke-width="1.4"/><path d="M12 387 L16 384.5 V389.5 Z M27 387 L23 384.5 V389.5 Z" fill="#eee" stroke="none"/>
<path d="M12 434 L28 424 M14 426 V436 M18 423 V434 M22 421 V432 M26 419 V430" stroke-width="1.3"/>
</svg>
<svg width="1124" height="38" style="left:759px;top:943px" fill="none" stroke="#eee" stroke-width="1.5">
<rect x="186.5" y="0" width="36.5" height="35.5" fill="#1d5a8c" stroke="none"/>
<rect x="8" y="9" width="17" height="16.5" stroke="#555"/><path d="M8 12 H25" stroke="#555"/>
<rect x="43.5" y="9" width="17" height="16.5"/><path d="M52 9 V25.5"/>
<rect x="79.5" y="9" width="17" height="16.5"/><path d="M79.5 14 H96.5 M79.5 17.5 H96.5"/>
<path d="M110.5 12 V28" stroke="#777" stroke-width="1.2"/>
<path d="M124 8.5 H133 L138 13.5 V27 H124 Z M133 8.5 V13.5 H138 M131 14 V25 M126 19.5 H136" stroke-width="1.3"/><path d="M131 13 L129 15.5 H133 Z M131 26 L129 23.5 H133 Z M125 19.5 L127.5 17.5 V21.5 Z M137 19.5 L134.5 17.5 V21.5 Z" fill="#eee" stroke="none"/>
<path d="M160 8.5 H174 M160 6.5 V10.5 M174 6.5 V10.5 M162 27 V14 H169 L173 18 V22 M160 25 H174 M160 23 V27 M174 23 V27" stroke-width="1.3"/>
<path d="M204 27 L200.5 22.5 L197.5 19.5 C196.5 18 198 16.5 199.5 17.5 L201.5 19 L200 12 A1.3 1.3 0 0 1 202.6 11.4 L204.2 17.5 L204.5 9.8 A1.3 1.3 0 0 1 207.1 9.8 L207.1 17.5 L209 11 A1.3 1.3 0 0 1 211.5 11.6 L210.3 18 L212.3 14 A1.3 1.3 0 0 1 214.6 15 L212 23 L210.5 27 Z" stroke="#e8f6ff" stroke-width="1.3" stroke-linejoin="round"/>
<path d="M236 9 V25 L240 21 L243 27 L245.5 26 L242.5 20 L247.5 19.5 Z" stroke-width="1.3"/>
<path d="M269 8.5 H276 M269 26.5 H276 M272.5 8.5 V26.5" stroke-width="1.3"/><text x="276" y="22" font-size="11" fill="#eee" stroke="none" font-family="Liberation Sans">A</text>
<circle cx="309.5" cy="16" r="6.8"/><path d="M314.5 21 L321 27.5 M306.5 14 H312.5 M309.5 11 V17 M306.5 19 H312.5" stroke-width="1.3"/>
<path d="M346 12 V23 M354 12 L348 17.5 L354 23 Z" stroke="#555" stroke-width="1.3"/>
<path d="M388 12 L382 17.5 L388 23 Z" stroke="#555" stroke-width="1.3"/>
<rect x="404.5" y="5.5" width="306" height="25" rx="2" stroke="#777" stroke-width="1.3"/>
<path d="M726.5 12 L732 17.5 L726.5 23 Z" stroke="#555" stroke-width="1.3"/>
<rect x="757.5" y="0" width="16.5" height="35.5" fill="#383838" stroke="none"/>
<path d="M762 15 L766 19 L770 15" stroke-width="1.2"/>
<circle cx="794" cy="17.5" r="8.5" stroke-width="1.8"/><path d="M794 9 A8.5 8.5 0 0 0 794 26 Z" fill="#eee" stroke="none"/>
</svg>
<span class="t" style="left:1251px;top:952px;font-size:15px;letter-spacing:-0.1px;color:#eaeaea">Floor Plan (1 sur 1)</span>
<span class="t" style="left:1581px;top:951px;font-size:16.9px;color:#f0f0f0">42.00 x 30.00 in</span>
<span class="t" style="left:1724.5px;top:951px;font-size:16.7px;color:#f0f0f0">3.75 en = 18.288 m</span>
<svg width="720" height="38" style="left:37px;top:943px" fill="none" stroke="#eee" stroke-width="1.4">
<path d="M6 25.5 L11.5 13 L17 25.5 Z"/>
<path d="M31 19.5 H678" stroke="#3c3c3c" stroke-width="3"/>
<circle cx="140" cy="19.5" r="7.5" fill="#9c9c9c" stroke="none"/>
<path d="M692.5 27 L700.5 10.5 L708.5 27 Z" stroke-width="1.5"/>
</svg>
<svg width="700" height="38" style="left:1217px;top:983px" fill="none" stroke="#eee" stroke-width="1.5">
<rect x="73" y="2" width="36" height="36" fill="#1d5a8c" stroke="none"/>
<rect x="181" y="2" width="35.5" height="36" fill="#1d5a8c" stroke="none"/>
<path d="M10 12 H27 M10 17.5 H27 M10 23 H27 M13.5 9.5 V26.5 M18.5 9.5 V26.5 M23.5 9.5 V26.5" stroke-width="1.4"/>
<path d="M46 12 H62 M46 17.5 H55 M46 23 H53 M49 9.5 V26.5 M54 9.5 V20 M59 9.5 V14" stroke-width="1.4"/>
<path d="M56 18 H59.5 A4.5 4.5 0 0 1 59.5 27 H56" stroke-width="3.2"/><path d="M55 21 H59 A1.5 1.5 0 0 1 59 24 H55 Z" fill="#2d2d2d" stroke="none"/>
<path d="M95 21 V16 L90 10.5 H84.5 V28 H89" stroke="#e6f6ff" stroke-width="1.4"/><path d="M90 10.5 V16 H95" stroke="#e6f6ff" stroke-width="1.3"/>
<path d="M91 18.5 H95 A4.5 4.5 0 0 1 95 27.5 H91" stroke="#bfeaff" stroke-width="3.2"/><path d="M90 21.5 H94.5 A1.5 1.5 0 0 1 94.5 24.5 H90 Z" fill="#1d5a8c" stroke="none"/>
<path d="M121 26 L131 13.5 L135.5 17.5 L133 20.5" stroke-width="1.4"/><path d="M120 25 L122.5 28.5" stroke-width="2"/>
<path d="M127 18.5 H131 A4.5 4.5 0 0 1 131 27.5 H127" stroke-width="3.2"/><path d="M126 21.5 H130.5 A1.5 1.5 0 0 1 130.5 24.5 H126 Z" fill="#2d2d2d" stroke="none"/>
<path d="M156 26 L167 12 L172 16.5 L167 22" stroke-width="1.4"/><path d="M155 25 L157.5 28.5" stroke-width="2"/>
<path d="M172 21 A4.5 4.5 0 1 1 168 18" stroke="#2f78b8" stroke-width="2"/>
<rect x="190.5" y="10.5" width="17.5" height="18" stroke="#e6f6ff" stroke-width="1.4"/><path d="M190.5 13.5 H208" stroke="#e6f6ff" stroke-width="1.3"/>
<path d="M193 18.5 H205 M202 16 L205 18.5 L202 21 M205 24 H193 M196 21.5 L193 24 L196 26.5" stroke="#e6f6ff" stroke-width="1.3"/>
<path d="M220 17.5 L224.5 22 L229 17.5" stroke-width="1.2"/>
</svg>
<span class="t" style="left:1480px;top:994px;font-size:14.4px;color:#dcdcdc">3.75 en = 18.288 m</span>
<span class="t" style="left:1636.5px;top:994px;font-size:14.4px;color:#dcdcdc">42.00 x 30.00 in</span>
<span class="t" style="left:1799.5px;top:994px;font-size:14.1px;color:#dcdcdc">(1.86, 26.86)</span>
<!-- DIALOG -->
<div class="a" style="left:498px;top:180px;width:924px;height:660px;background:#f5c24e"></div>
<div class="a" style="left:503px;top:185px;width:914px;height:649px;background:#0a0a0a"></div>
<div class="a" style="left:505px;top:185px;width:910px;height:30px;background:#000"></div>
<div class="a" style="left:505px;top:215px;width:910px;height:617px;background:#2f2f2f"></div>
<span class="t" style="left:513px;top:192px;font-size:17px;color:#fff">Gérer les trousses à outils</span>
<span class="t" style="left:528px;top:235px;font-size:15px;color:#e6e6e6">Trousses à outils</span>


<style>
.cb{position:absolute;width:18px;height:18px;border:1.5px solid #8a8a8a;border-radius:3px}
.rw{font-size:15px;color:#f6f6f6;-webkit-text-stroke:0.25px #f6f6f6}
.hd{font-size:15px;color:#e8e8e8}
</style>
<div class="a" style="left:528px;top:259px;width:865px;height:453px;border:1.5px solid #7a7a7a;border-radius:6px;overflow:hidden;background:#2d2d2d">
 <div class="a" style="left:0;top:0;width:863px;height:31px;background:#3b3b3b;border-bottom:2px solid #7e7e7e"></div>
 <div class="a" style="left:42px;top:0;width:1.5px;height:31px;background:#6a6a6a"></div>
 <div class="a" style="left:229px;top:0;width:1.5px;height:31px;background:#6a6a6a"></div>
 <div class="a" style="left:702px;top:0;width:1.5px;height:31px;background:#6a6a6a"></div>
 <span class="t hd" style="left:57px;top:8px">Titre</span>
 <span class="t hd" style="left:245px;top:8px">Chemin d’accès</span>
 <span class="t hd" style="left:718px;top:8px">Afficher dan…</span>
 <div class="a" style="left:843px;top:33px;width:20px;height:420px;background:#3d3d3d"></div>
 <div class="a" style="left:844px;top:54px;width:19px;height:290px;background:#8f8f8f"></div>
 <svg width="20" height="20" style="left:843px;top:36px"><path d="M5 12 L10 7 L15 12" fill="none" stroke="#eee" stroke-width="1.4"/></svg>
 <svg width="20" height="20" style="left:843px;top:432px"><path d="M5 7 L10 12 L15 7" fill="none" stroke="#eee" stroke-width="1.4"/></svg>
<div class="cb" style="left:13px;top:43px"></div>
<span class="t rw" style="left:53px;top:43px">Éléments récents</span>
<span class="t rw" style="left:241px;top:43px">Recent Tools</span>
<span class="t rw" style="left:714px;top:43px">Oui</span>
<div class="cb" style="left:13px;top:82px"><svg width="18" height="18" style="left:-1px;top:-1px"><path d="M4 9.5 L7.5 13.2 L14 5" fill="none" stroke="#f0f0f0" stroke-width="1.2"/></svg></div>
<span class="t rw" style="left:53px;top:82px">Architect Review</span>
<span class="t rw" style="left:241px;top:82px">Architect Review.btx</span>
<div class="cb" style="left:13px;top:120px"></div>
<span class="t rw" style="left:53px;top:121px">Contractor Review</span>
<span class="t rw" style="left:241px;top:121px">Contractor Review.btx</span>
<div class="cb" style="left:13px;top:159px"><svg width="18" height="18" style="left:-1px;top:-1px"><path d="M4 9.5 L7.5 13.2 L14 5" fill="none" stroke="#f0f0f0" stroke-width="1.2"/></svg></div>
<span class="t rw" style="left:53px;top:160px">Engineer Review</span>
<span class="t rw" style="left:241px;top:160px">Engineer Review.btx</span>
<div class="cb" style="left:13px;top:198px"></div>
<span class="t rw" style="left:53px;top:198px">General Measurements</span>
<span class="t rw" style="left:241px;top:198px">General Use.btx</span>
<div class="cb" style="left:13px;top:237px"></div>
<span class="t rw" style="left:53px;top:237px">Design Symbols</span>
<span class="t rw" style="left:241px;top:237px">Design Symbols.btx</span>
<div class="cb" style="left:13px;top:275px"></div>
<span class="t rw" style="left:53px;top:276px">Construction Symbols</span>
<span class="t rw" style="left:241px;top:276px">Construction Symbols.btx</span>
<div class="cb" style="left:13px;top:314px"></div>
<span class="t rw" style="left:53px;top:315px">Brighter Graphics Toolset</span>
<span class="t rw" style="left:241px;top:315px">..\..\..\..\..\Downloads\Brighter Graphics Toolset.btx</span>
<div class="cb" style="left:13px;top:353px"></div>
<span class="t rw" style="left:53px;top:353px">Site Planning</span>
<span class="t rw" style="left:241px;top:353px">..\..\..\..\..\Downloads\Site Planning.btx</span>
<span class="t rw" style="left:714px;top:353px">Oui</span>
<div class="cb" style="left:13px;top:391px"><svg width="18" height="18" style="left:-1px;top:-1px"><path d="M4 9.5 L7.5 13.2 L14 5" fill="none" stroke="#f0f0f0" stroke-width="1.2"/></svg></div>
<span class="t rw" style="left:53px;top:392px">BG Tools</span>
<span class="t rw" style="left:241px;top:392px">BG Tools.btx</span>
<span class="t rw" style="left:714px;top:392px">Oui</span>
<div class="cb" style="left:13px;top:430px"></div>
<span class="t rw" style="left:53px;top:431px">ATC Tools</span>
<span class="t rw" style="left:241px;top:431px">ATC Tools.btx</span>
<span class="t rw" style="left:714px;top:431px">Oui</span>
</div>
<svg width="20" height="20" style="left:531px;top:733px"><path d="M10 2 V18 M2 10 H18" stroke="#e0e0e0" stroke-width="1.6"/></svg>
<svg width="22" height="22" style="left:575px;top:733px"><path d="M3 20 L4 15 L16 3 L20 7 L8 19 Z" fill="none" stroke="#4a4a4a" stroke-width="1.5"/></svg>
<svg width="22" height="22" style="left:618px;top:733px"><path d="M3 4 H19 M8 4 V2 H14 V4 M5 4 L6 20 H16 L17 4 M9 7 V17 M13 7 V17" fill="none" stroke="#464646" stroke-width="1.5"/></svg>
<div class="a" style="left:1156px;top:725px;width:113px;height:32px;border:1.5px solid #8a8a8a;border-radius:4px;background:#3a3a3a"></div>
<span class="t" style="left:1184px;top:733px;font-size:15px;color:#f0f0f0">Importer</span>
<div class="a" style="left:1281px;top:725px;width:112px;height:32px;border:1.5px solid #6e6e6e;border-radius:4px;background:#2f2f2f"></div>
<span class="t" style="left:1309px;top:733px;font-size:15px;color:#8c8c8c">Exporter</span>
<div class="a" style="left:1318px;top:780px;width:76px;height:32px;border-radius:4px;background:#0b79d6;border-bottom:2px solid #0a5ea8"></div>
<span class="t" style="left:1345px;top:788px;font-size:15px;color:#fff">OK</span>
<svg width="22" height="22" style="left:1384.5px;top:190px"><path d="M4.3 5 L17.7 18 M17.7 5 L4.3 18" stroke="#f4f4f4" stroke-width="1.4"/></svg>
<svg width="10" height="10" style="left:1401px;top:818px"><g fill="#8a8a8a"><rect x="7" y="1" width="2" height="2"/><rect x="4" y="4" width="2" height="2"/><rect x="7" y="4" width="2" height="2"/><rect x="1" y="7" width="2" height="2"/><rect x="4" y="7" width="2" height="2"/><rect x="7" y="7" width="2" height="2"/></g></svg>

</body></html>
